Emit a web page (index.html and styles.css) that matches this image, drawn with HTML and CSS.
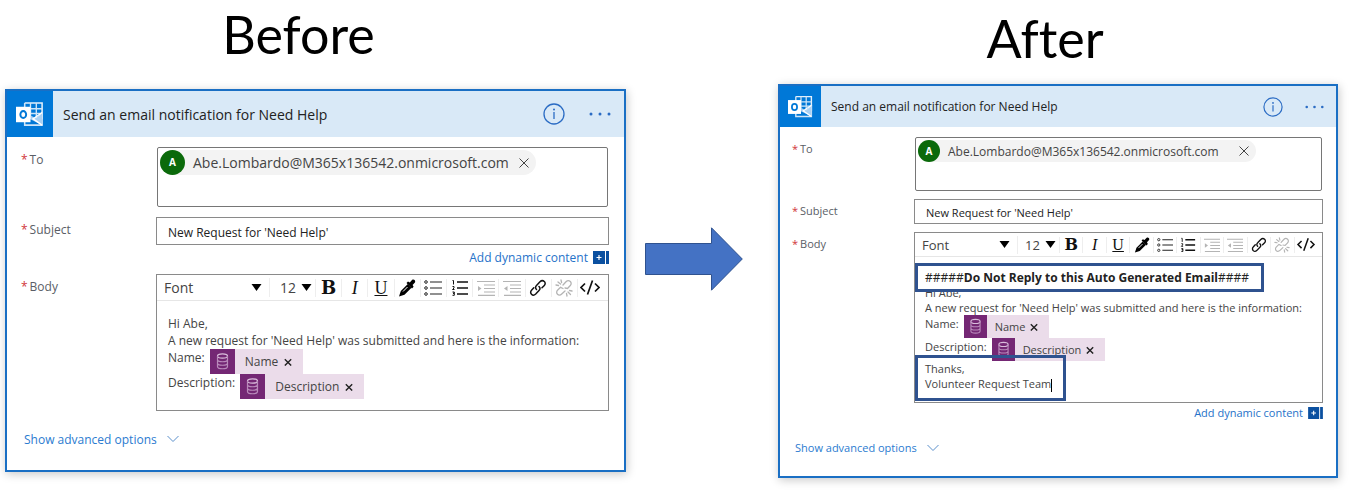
FILE: index.html
```
<!DOCTYPE html>
<html lang="en">
<head>
<meta charset="utf-8">
<title>Before and After</title>
<link rel="stylesheet" href="styles.css">
</head>
<body>
<svg class="sprite" aria-hidden="true">
  <symbol id="i-outlook" viewBox="0 0 30 26">
    <path d="M9 1h18v17" fill="none" stroke="#e4f0fb" stroke-width="1.6"/>
    <path d="M9 1v23h18V12l-7 6" fill="none" stroke="#cfe5f8" stroke-width="1.6"/>
    <path d="M15 1v17M21 1v16M10 7h17M15 12h12" fill="none" stroke="#cfe5f8" stroke-width="1.4"/>
    <path d="M15 18l12 6V12l-6 5-6-3z" fill="#a9d0f3"/>
    <path d="M17 17l10 7M17 18l10-7" stroke="#fff" stroke-width="1.4"/>
    <path d="M0 5h15v16H0z" fill="#fff"/>
    <ellipse cx="7.500" cy="13" rx="3" ry="3.600" fill="none" stroke="#0078d7" stroke-width="2"/>
  </symbol>
  <symbol id="i-info" viewBox="0 0 22 22">
    <circle cx="11" cy="11" r="10" fill="none" stroke="currentColor" stroke-width="1.300"/>
    <path d="M11 9v7" stroke="currentColor" stroke-width="1.300"/><circle cx="11" cy="6.500" r="1" fill="currentColor"/>
  </symbol>
  <symbol id="i-more" viewBox="0 0 22 6">
    <circle cx="2" cy="3" r="1.500" fill="currentColor"/><circle cx="11" cy="3" r="1.500" fill="currentColor"/><circle cx="20" cy="3" r="1.500" fill="currentColor"/>
  </symbol>
  <symbol id="i-close" viewBox="0 0 10 10"><path d="M.5.5l9 9M9.500.5l-9 9" stroke="currentColor" stroke-width="1"/></symbol>
  <symbol id="i-x" viewBox="0 0 10 10"><path d="M1 1.500l8 8M9 1.500l-8 8" stroke="currentColor" stroke-width="1.700"/></symbol>
  <symbol id="i-caret" viewBox="0 0 10 7"><path d="M0 0h10L5 7z"/></symbol>
  <symbol id="i-dyn" viewBox="0 0 16 13">
    <path d="M0 0h12v13H0zM13 0h3v13h-3z" fill="#0b50a0"/><path d="M3.500 6.500h5M6 4v5" stroke="#fff" stroke-width="1.200"/>
  </symbol>
  <symbol id="i-chevron" viewBox="0 0 12 8"><path d="M.5 1L6 6.500 11.500 1" fill="none" stroke="currentColor" stroke-width="1"/></symbol>
  <symbol id="i-db" viewBox="0 0 25 25">
    <g fill="none" stroke="#b98abb" stroke-width="1.200"><ellipse cx="12.500" cy="7" rx="5" ry="2.200" stroke="#d9bcdb"/>
    <path d="M7.500 7v10.500c0 3 10 3 10 0V7M7.500 10.500c0 3 10 3 10 0M7.500 14c0 3 10 3 10 0"/></g>
  </symbol>
  <symbol id="i-pen" viewBox="0 0 18 18">
    <path d="M1 17.500l1.800-5.500 7-7 3.700 3.700-7 7z"/><path d="M5 12.500l4.500-4.500" stroke="#fff" stroke-width="1"/>
    <path d="M8.500 4l1.500-1.500 1.800.9L14 1c2-1.500 4.200 1 2.700 2.700L14.600 6l1 1.800L14 9.500z"/>
  </symbol>
  <symbol id="i-ul" viewBox="0 0 18 18">
    <path d="M6 3h12M6 9h12M6 15h12" stroke="#222" stroke-width="1.200"/>
    <g fill="none" stroke="#222"><circle cx="2" cy="3" r="1.300"/><circle cx="2" cy="9" r="1.300"/><circle cx="2" cy="15" r="1.300"/></g>
  </symbol>
  <symbol id="i-ol" viewBox="0 0 18 18">
    <path d="M6 3h11M6 9h11M6 15h11" stroke="#111" stroke-width="1.600"/>
    <path d="M1.500 1.500h1v4M1.500 7.500h1.500v1.500L1.500 10.500h2M1.500 13h1.800v1.300H2h1.300v2H1.500" fill="none" stroke="#111" stroke-width="1"/>
  </symbol>
  <symbol id="i-indent" viewBox="0 0 18 18">
    <path d="M0 2.500h18M7 6h11M7 9.500h11M7 13h11M1 16.300h17" stroke="#b4b4b4" stroke-width="1.200"/><path d="M1 7l3.500 2.500L1 12z" fill="#b4b4b4"/>
  </symbol>
  <symbol id="i-outdent" viewBox="0 0 18 18">
    <path d="M0 2.500h18M7 6h11M7 9.500h11M7 13h11M1 16.300h17" stroke="#b4b4b4" stroke-width="1.200"/><path d="M4.500 7L1 9.500 4.500 12z" fill="#b4b4b4"/>
  </symbol>
  <symbol id="i-link" viewBox="0 0 18 18">
    <g fill="none" stroke="currentColor" stroke-width="1.500" stroke-linecap="round">
    <path d="M7.500 10.500c-1.500-1.500-1-3 0-4l3.500-3.700c1.500-1.500 3.200-1.300 4.300-.3s1.200 2.800 0 4l-2.300 2.300"/>
    <path d="M10 7.500c1.500 1.500 1 3 0 4L6.700 15c-1.500 1.500-3.200 1.300-4.200.3s-1.200-2.800 0-4l2.300-2.500"/></g>
  </symbol>
  <symbol id="i-unlink" viewBox="0 0 18 18">
    <g fill="none" stroke="#b4b4b4" stroke-width="1.300" stroke-linecap="round">
    <path d="M8 6l3-3.200c1.500-1.500 3.200-1.300 4.300-.3s1.200 2.800 0 4L12.500 9.500 10 9"/>
    <path d="M10 12l-3.300 3c-1.500 1.500-3.200 1.300-4.200.3s-1.200-2.800 0-4l3-3L8 9.500"/>
    <path d="M3 3l2.500 2M6 1l.6 2.500M1 6l2.500.5M15.500 15.500l-2.500-2.500M12 17l-.5-2.500M17 12l-2.500-.5"/></g>
  </symbol>
  <symbol id="i-code" viewBox="0 0 20 18">
    <path d="M5 4.500L1 8.500l4 4M15 4.500l4 4-4 4M12.500 1.500L7.500 15.500" fill="none" stroke="#111" stroke-width="1.700"/>
  </symbol>
</svg>

<main class="compare">
  <section class="side side-before">
    <h1 class="side-title">Before</h1>
    <article class="card">
      <header class="card-head">
        <span class="card-logo"><svg><use href="#i-outlook"/></svg></span>
        <h2 class="card-title">Send an email notification for Need Help</h2>
        <button class="icon-btn info" aria-label="Information"><svg><use href="#i-info"/></svg></button>
        <button class="icon-btn more" aria-label="More"><svg><use href="#i-more"/></svg></button>
      </header>
      <div class="card-body">
        <div class="form">
          <label class="label" for="to-1"><span class="req">*</span>To</label>
          <div class="picker">
            <span class="person"><span class="avatar">A</span><span class="address">Abe.Lombardo@M365x136542.onmicrosoft.com</span><button class="icon-btn remove" aria-label="Remove"><svg><use href="#i-close"/></svg></button></span>
            <input class="picker-input" id="to-1" type="text">
          </div>
          <label class="label" for="subject-1"><span class="req">*</span>Subject</label>
          <input class="text-input" id="subject-1" type="text" value="New Request for 'Need Help'">
          <a class="dynamic" href="#">Add dynamic content <svg><use href="#i-dyn"/></svg></a>
          <span class="label" id="body-1"><span class="req">*</span>Body</span>
          <div class="editor">
            <div class="toolbar">
              <span class="pick pick-font"><select aria-label="Font"><option>Font</option></select><svg><use href="#i-caret"/></svg></span>
              <span class="pick pick-size"><select aria-label="Size"><option>12</option></select><svg><use href="#i-caret"/></svg></span>
              <button class="tool bold">B</button>
              <button class="tool italic">I</button>
              <button class="tool underline">U</button>
              <button class="tool" aria-label="Color"><svg><use href="#i-pen"/></svg></button>
              <button class="tool" aria-label="Bullets"><svg><use href="#i-ul"/></svg></button>
              <button class="tool" aria-label="Numbering"><svg><use href="#i-ol"/></svg></button>
              <button class="tool" aria-label="Indent"><svg><use href="#i-indent"/></svg></button>
              <button class="tool" aria-label="Outdent"><svg><use href="#i-outdent"/></svg></button>
              <button class="tool" aria-label="Link"><svg><use href="#i-link"/></svg></button>
              <button class="tool" aria-label="Unlink"><svg><use href="#i-unlink"/></svg></button>
              <button class="tool code" aria-label="Code view"><svg><use href="#i-code"/></svg></button>
            </div>
            <div class="content" contenteditable="true" role="textbox" aria-labelledby="body-1">
              <p>Hi Abe,</p>
              <p>A new request for 'Need Help' was submitted and here is the information:</p>
              <p class="token-line">Name: <span class="token"><svg class="token-icon"><use href="#i-db"/></svg><span>Name</span><button class="icon-btn token-x" aria-label="Remove Name"><svg><use href="#i-x"/></svg></button></span></p>
              <p class="token-line">Description: <span class="token"><svg class="token-icon"><use href="#i-db"/></svg><span>Description</span><button class="icon-btn token-x" aria-label="Remove Description"><svg><use href="#i-x"/></svg></button></span></p>
            </div>
          </div>
        </div>
        <a class="advanced" href="#">Show advanced options <svg><use href="#i-chevron"/></svg></a>
      </div>
    </article>
  </section>

  <div class="arrow">
    <svg viewBox="0 0 98 64"><path d="M.5 16.500h66V.8L97.300 32 66.500 63.200V47.500H.5z" fill="#4472c4" stroke="#2f528f"/></svg>
  </div>

  <section class="side side-after">
    <h1 class="side-title">After</h1>
    <article class="card">
      <header class="card-head">
        <span class="card-logo"><svg><use href="#i-outlook"/></svg></span>
        <h2 class="card-title">Send an email notification for Need Help</h2>
        <button class="icon-btn info" aria-label="Information"><svg><use href="#i-info"/></svg></button>
        <button class="icon-btn more" aria-label="More"><svg><use href="#i-more"/></svg></button>
      </header>
      <div class="card-body">
        <div class="form">
          <label class="label" for="to-2"><span class="req">*</span>To</label>
          <div class="picker">
            <span class="person"><span class="avatar">A</span><span class="address">Abe.Lombardo@M365x136542.onmicrosoft.com</span><button class="icon-btn remove" aria-label="Remove"><svg><use href="#i-close"/></svg></button></span>
            <input class="picker-input" id="to-2" type="text">
          </div>
          <label class="label" for="subject-2"><span class="req">*</span>Subject</label>
          <input class="text-input" id="subject-2" type="text" value="New Request for 'Need Help'">
          <span class="label" id="body-2"><span class="req">*</span>Body</span>
          <div class="editor">
            <div class="toolbar">
              <span class="pick pick-font"><select aria-label="Font"><option>Font</option></select><svg><use href="#i-caret"/></svg></span>
              <span class="pick pick-size"><select aria-label="Size"><option>12</option></select><svg><use href="#i-caret"/></svg></span>
              <button class="tool bold">B</button>
              <button class="tool italic">I</button>
              <button class="tool underline">U</button>
              <button class="tool" aria-label="Color"><svg><use href="#i-pen"/></svg></button>
              <button class="tool" aria-label="Bullets"><svg><use href="#i-ul"/></svg></button>
              <button class="tool" aria-label="Numbering"><svg><use href="#i-ol"/></svg></button>
              <button class="tool" aria-label="Indent"><svg><use href="#i-indent"/></svg></button>
              <button class="tool" aria-label="Outdent"><svg><use href="#i-outdent"/></svg></button>
              <button class="tool" aria-label="Link"><svg><use href="#i-link"/></svg></button>
              <button class="tool" aria-label="Unlink"><svg><use href="#i-unlink"/></svg></button>
              <button class="tool code" aria-label="Code view"><svg><use href="#i-code"/></svg></button>
            </div>
            <div class="content" contenteditable="true" role="textbox" aria-labelledby="body-2">
              <p class="mark mark-notice">#####<b>Do Not Reply to this Auto Generated Email</b>####</p>
              <p>Hi Abe,</p>
              <p>A new request for 'Need Help' was submitted and here is the information:</p>
              <p class="token-line">Name: <span class="token"><svg class="token-icon"><use href="#i-db"/></svg><span>Name</span><button class="icon-btn token-x" aria-label="Remove Name"><svg><use href="#i-x"/></svg></button></span></p>
              <p class="token-line">Description: <span class="token"><svg class="token-icon"><use href="#i-db"/></svg><span>Description</span><button class="icon-btn token-x" aria-label="Remove Description"><svg><use href="#i-x"/></svg></button></span></p>
              <div class="mark mark-sign"><p>Thanks,</p><p>Volunteer Request Team<span class="cursor"></span></p></div>
            </div>
          </div>
          <a class="dynamic" href="#">Add dynamic content <svg><use href="#i-dyn"/></svg></a>
        </div>
        <a class="advanced" href="#">Show advanced options <svg><use href="#i-chevron"/></svg></a>
      </div>
    </article>
  </section>
</main>
</body>
</html>
```

FILE: styles.css
```
* { box-sizing: border-box; }

body {
  margin: 0;
  background: #fff;
  color: #444;
  font-family: "Open Sans", "Noto Sans", sans-serif;
}

p, h1, h2 { margin: 0; font-weight: 400; }
a { text-decoration: none; }
button, input, select { font: inherit; color: inherit; padding: 0; margin: 0; border: 0; background: none; }
svg { display: block; }
.sprite { display: none; }

.compare {
  display: grid;
  grid-template-columns: 621fr 152fr 560fr;
  align-items: start;
  padding: 0 16px 16px 5px;
}

/* Sizes of the two cards */
.side-before {
  --title: 14px;
  --text: 12px;
  --address: 14px;
  --pick-text: 14px;
  --body-text: 12px;
  --link: 12px;
  --head: 46px;
  --logo: 29px;
  --label-col: 135px;
  --label-line: 26px;
  --pad-l: 13px;
  --pad-r: 15px;
  --gap: 10px;
  --picker: 60px;
  --input: 28px;
  --avatar: 25px;
  --line: 17px;
  --token: 25px;
  --tool-icon: 18px;
  --bar: 26px;
  --font-pick: 112px;
  --size-pick: 44px;
}

.side-after {
  --title: 12px;
  --text: 11px;
  --address: 12px;
  --pick-text: 13px;
  --body-text: 11px;
  --link: 11px;
  --head: 41px;
  --logo: 26px;
  --label-col: 122px;
  --label-line: 23px;
  --pad-l: 11px;
  --pad-r: 13px;
  --gap: 8px;
  --picker: 54px;
  --input: 25px;
  --avatar: 22px;
  --line: 15px;
  --token: 23px;
  --tool-icon: 16px;
  --bar: 24px;
  --font-pick: 102px;
  --size-pick: 40px;
}

.side-title {
  color: #000;
  font-family: Lato, sans-serif;
  font-size: 52px;
  font-variant-ligatures: none;
  text-align: center;
}
.side-before .side-title { line-height: 68px; padding: 0 34px 21px 0; }
.side-after .side-title { line-height: 76px; padding: 0 26px 8px 0; }

.card {
  border: 2px solid #1a6fc4;
  background: #fff;
  box-shadow: 1px 2px 9px rgba(0, 0, 0, 0.22);
}

.card-head {
  display: flex;
  align-items: center;
  height: var(--head);
  background: #d9e9f7;
}
.card-logo {
  display: grid;
  place-items: center;
  width: var(--head);
  height: var(--head);
  background: #0078d7;
}
.card-logo svg { width: var(--logo); height: var(--logo); }
.card-title {
  flex: 1;
  padding-left: 10px;
  color: #222;
  font-size: var(--title);
}
.icon-btn { display: grid; place-items: center; cursor: pointer; }
.info, .more { color: #2b6cc4; }
.info { margin-right: 24px; }
.more { margin-right: 13px; }
.info svg { width: 22px; height: 22px; }
.more svg { width: 22px; height: 6px; }
.side-after .info { margin-right: 22px; }
.side-after .more { margin-right: 12px; }
.side-after .info svg { width: 20px; height: 20px; }
.side-after .more svg { width: 19px; }

.card-body { padding: 10px var(--pad-r) 21px var(--pad-l); }
.side-after .card-body { padding-bottom: 18px; }

.form {
  display: grid;
  grid-template-columns: var(--label-col) minmax(0, 1fr);
  padding-left: 1px;
  row-gap: var(--gap);
}
.label {
  display: flex;
  gap: 2px;
  color: #5a5e66;
  font-size: var(--text);
  line-height: var(--label-line);
}
.req { color: #d13438; }

.picker {
  display: flex;
  align-items: flex-start;
  height: var(--picker);
  margin: 0 1px;
  padding: 2px;
  border: 1px solid #767676;
  border-radius: 2px;
}
.picker-input { flex: 1; min-width: 0; height: var(--avatar); outline: 0; }
.person {
  display: flex;
  align-items: center;
  height: var(--avatar);
  padding-right: 7px;
  border-radius: 13px;
  background: #f3f3f3;
  color: #444;
}
.avatar {
  width: var(--avatar);
  border-radius: 50%;
  background: #0b6a0b;
  color: #fff;
  font-size: 10px;
  font-weight: 700;
  line-height: var(--avatar);
  text-align: center;
}
.address { padding: 0 10px 0 8px; font-size: var(--address); }
.side-after .address { padding-right: 20px; }
.remove svg { width: 10px; height: 10px; }

.text-input {
  width: 100%;
  height: var(--input);
  padding: 2px 11px 0;
  border: 1px solid #8a8a8a;
  color: #222;
  font-size: var(--text);
}

.dynamic {
  display: flex;
  grid-column: 2;
  align-items: center;
  justify-content: flex-end;
  gap: 5px;
  height: 24px;
  margin: calc(0px - var(--gap)) 0 calc(5px - var(--gap));
  color: #2672c9;
  font-size: var(--link);
}
.dynamic svg { width: 16px; height: 13px; }
.side-after .dynamic { height: 20px; }
.side-after .dynamic svg { width: 15px; height: 12px; }

.editor { border: 1px solid #8a8a8a; }
.toolbar {
  display: flex;
  align-items: center;
  height: var(--bar);
  padding-right: 5px;
  border-bottom: 1px solid #e6e6e6;
}
.pick { display: grid; align-items: center; }
.pick select, .pick svg { grid-area: 1 / 1; }
.pick select {
  width: 100%;
  padding-left: 7px;
  appearance: none;
  color: #444;
  font-size: var(--pick-text);
}
.pick svg { width: 11px; height: 7px; justify-self: end; pointer-events: none; }
.pick-font { width: var(--font-pick); padding-right: 7px; }
.pick-size { width: var(--size-pick); padding-right: 1px; border-left: 1px solid #eee; }
.side-before .pick-size select { padding-left: 10px; }
.tool {
  display: grid;
  flex: 1 1 0;
  place-items: center;
  min-width: 0;
  height: var(--tool-icon);
  border-left: 1px solid #eee;
  color: #111;
  font-family: "Liberation Serif", serif;
  font-size: var(--tool-icon);
  line-height: 1;
}
.pick-size + .tool { margin-left: 2px; }
.tool svg { width: var(--tool-icon); height: var(--tool-icon); }
.code svg { width: 20px; }
.bold { font-family: "DejaVu Serif", serif; font-weight: 700; }
.italic { font-style: italic; }
.underline { text-decoration: underline; }

.content {
  padding: 14px 11px 11px;
  outline: 0;
  font-size: var(--body-text);
  line-height: var(--line);
}
.token-line { display: flex; gap: 5px; height: var(--token); line-height: 18px; }
.token {
  display: flex;
  align-items: center;
  height: var(--token);
  padding-right: 11px;
  background: #ebdcea;
  color: #444;
}
.token-icon { width: var(--token); height: var(--token); margin-right: 10px; background: #742774; }
.token-x { margin-left: 6px; }
.token-x svg { width: 8px; height: 8px; color: #222; }

.side-after .content { padding: 6px 11px 1px 10px; }
.side-after .token-icon { margin-right: 8px; }
.side-after .token-x { margin-left: 5px; }
.mark {
  position: relative;
  width: fit-content;
  margin-left: -10px;
  border: 3px solid #2f528f;
}
.mark-notice {
  margin-bottom: -7px;
  padding: 4px 12px 4px 7px;
  background: #fff;
  color: #222;
  font-size: 12px;
}
.mark-sign { margin-top: -6px; padding: 3px 11px 6px 7px; }
.cursor { display: inline-block; width: 1px; height: 13px; background: #000; vertical-align: middle; }

.advanced {
  display: flex;
  align-items: center;
  gap: 10px;
  height: 20px;
  margin-top: 18px;
  padding-left: 4px;
  color: #2b7bd0;
  font-size: var(--link);
}
.advanced svg { width: 12px; height: 8px; color: #5b8fcb; }

.arrow { padding: 227px 35px 0 19px; }
.arrow svg { width: 100%; }
```
